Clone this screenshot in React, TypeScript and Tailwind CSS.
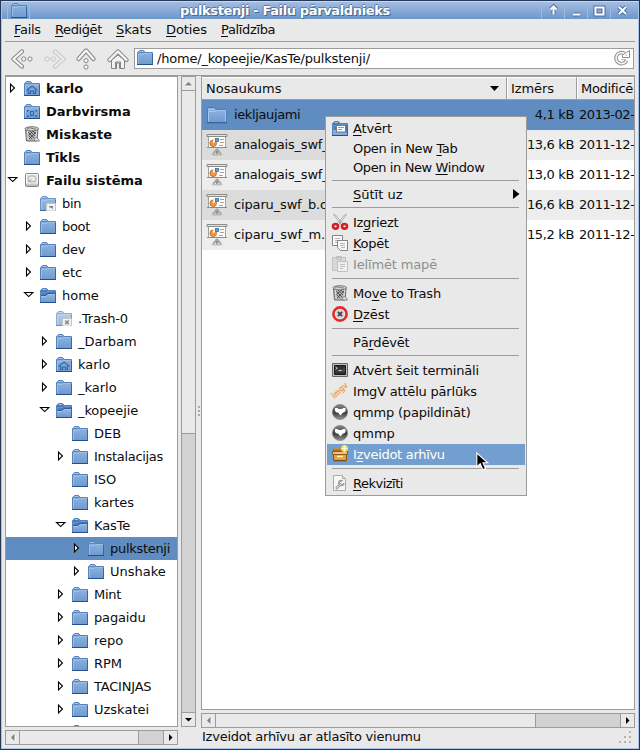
import React from "react";

type FolderKind = "plain" | "home" | "desktop" | "open" | "link" | "locked" | "doc";

function Folder({ kind = "plain" }: { kind?: FolderKind }) {
  const faded = kind === "link" ? 0.88 : kind === "locked" ? 0.65 : 1;
  const dark = kind === "open" || kind === "doc";
  return (
    <svg width="16" height="16" viewBox="0 0 16 16" className="block shrink-0">
      <defs>
        <linearGradient id="fbody" x1="0" y1="0" x2="0" y2="1">
          <stop offset="0" stopColor="#8fb5e1" />
          <stop offset="1" stopColor="#7099cf" />
        </linearGradient>
      </defs>
      <g opacity={faded}>
        <path d="M.5 15.500V3.500l2-2h4l1 1v1h8v12z" fill={dark ? "#4b7cb9" : "url(#fbody)"} stroke="#5482bd" />
        <path d="M1.500 3.500h4.500l1.500-1" stroke="#4c7bb8" fill="none" strokeWidth=".8" />
        <path d="M2.500 2.500h3.500" stroke="#a5c6ec" />
        <path d="M1.500 14.500V5.500h5l1-1h7" stroke={dark ? "#6b9ad2" : "#a3c4ea"} fill="none" strokeWidth=".8" />
        {kind === "open" && (
          <g>
            <path d="M1 15V9.500h5l2-2h7V15z" fill="url(#fbody)" />
            <path d="M1 9.500h5l2-2h7" fill="none" stroke="#a5c6ec" />
            <path d="M1 8.500h4.500l2-2H15" fill="none" stroke="#2f5f9f" />
          </g>
        )}
        <path d="M0 15.500h16" stroke="#24508f" />
        <path d="M15.500 5v10" stroke="#3766a6" />
      </g>
      {kind === "home" && (
        <g fill="none" stroke="#3767a7" strokeWidth="1.2">
          <path d="M2.500 10.500 8 6l5.500 4.500" />
          <path d="M4.500 10v3.500h2V11h3v2.500h2V10" />
        </g>
      )}
      {kind === "desktop" && (
        <g fill="none" stroke="#3767a7" strokeWidth="1.1">
          <path d="M5 7.500H3.500V9M11 7.500h1.500V9M3.500 12v1.500H5M12.500 12v1.500H11" />
          <rect x="6.500" y="8.500" width="3" height="4" />
        </g>
      )}
      {kind === "doc" && (
        <g>
          <path d="M4.500 12V5.500h9V12z" fill="#fff" stroke="#777" />
          <path d="M6 7.500h6M6 9.500h4" stroke="#999" />
          <path d="M1 15v-5h3v2.500h11V15z" fill="#83addd" />
          <path d="M0 15.500h16" stroke="#24508f" />
        </g>
      )}
      {(kind === "link" || kind === "locked") && (
        <g>
          <rect x="6.500" y="8.500" width="9" height="7.500" fill="#f2f2f0" stroke="#c4c4c4" />
          {kind === "link" ? (
            <path d="M9 11h4v3.500L12 13h-1l-2-1z" fill="#888" />
          ) : (
            <path d="m9.200 10.500 3.600 3.600m0-3.600-3.600 3.600" stroke="#888" strokeWidth="1.500" />
          )}
        </g>
      )}
    </svg>
  );
}

function BigFolder() {
  return (
    <svg width="22" height="20" viewBox="0 0 22 20" className="block shrink-0">
      <path d="M1.500 17.500v-14l1-1h6l1.500 2h9.500l1 1v12z" fill="url(#fbody)" stroke="#4b7ab7" />
      <path d="M2.500 16.500v-10h7l1-1h9v11" fill="none" stroke="#a9c8eb" />
      <path d="M2.500 4.500h6" stroke="#a9c8eb" />
      <path d="M1 17.800h20" stroke="#2f5d9e" />
    </svg>
  );
}

function Trash() {
  return (
    <svg width="16" height="16" viewBox="0 0 16 16" className="block shrink-0">
      <path d="m1.500 3 1 12h10.500L14 3z" fill="#b4b4b2" stroke="#6a6a68" />
      <path d="m4 6 6 6m-5 1 7-7M4 9l4 4m1-8 3 3M6 5l5 5m-6-1 4-4" stroke="#484846" strokeWidth=".9" />
      <path d="m3.500 5 .7 9M12.500 5l-.5 6" stroke="#e8e8e6" strokeWidth=".9" />
      <ellipse cx="7.800" cy="2.800" rx="6.800" ry="2.100" fill="#d3d3d1" stroke="#757573" />
      <path d="M3 3q2-2 4-1t5 1" fill="none" stroke="#777" />
      <path d="M10.500 12.500q2-2 3.500 0l1.500 2.500h-5z" fill="#ddd" stroke="#777" strokeWidth=".8" />
    </svg>
  );
}

function Drive() {
  return (
    <svg width="16" height="16" viewBox="0 0 16 16" className="block shrink-0">
      <rect x="1.500" y="1.500" width="13" height="13" rx="1" fill="#dededc" stroke="#868684" />
      <path d="M2.500 11.500v-9h11v9" fill="none" stroke="#f8f8f8" />
      <ellipse cx="8" cy="6.800" rx="4" ry="3" fill="#ececea" stroke="#b1b1af" />
      <path d="m4.500 10 3-3" stroke="#999" />
      <path d="M2 12.500h12v1.500H2z" fill="#b8b8b6" />
    </svg>
  );
}

function Presentation() {
  return (
    <svg width="22" height="22" viewBox="0 0 22 22" className="block shrink-0">
      <path d="M2.500 1.500h17v12h-17z" fill="#fcfcfb" stroke="#a2a39f" />
      <path d="M1 .5h20v2H1z" fill="#e2e2df" stroke="#8c8d89" />
      <circle cx="7.200" cy="9.300" r="3.300" fill="#e99a4c" stroke="#b5651c" strokeWidth=".8" />
      <path d="M7.200 9.300V5.500L10.500 7z" fill="#fff" />
      <rect x="9.500" y="4.500" width="3" height="3" fill="#6c9ad0" stroke="#396ba8" strokeWidth=".8" />
      <path d="M14 5.500h4M14 8.500h4M13 11.500h4" stroke="#a4a5a1" />
      <path d="M1 13.500h20" stroke="#8b8c88" />
      <path d="m11 15-4 5m4-5 4 5m-4-4v4M9 18h4" fill="none" stroke="#8f908c" strokeWidth="1.600" />
      <path d="m11 15.500-3.500 4m3.500-4 3.500 4" fill="none" stroke="#dcdcda" strokeWidth=".6" />
      <ellipse cx="11" cy="20.800" rx="6" ry=".8" fill="#9999" />
    </svg>
  );
}

function Expander({ open }: { open: boolean }) {
  return (
    <svg width="12" height="12" viewBox="0 0 12 12" className="block shrink-0">
      {open ? (
        <path d="M1.500 3.500h8.400L5.700 7.600z" fill="#fff" stroke="#000" strokeWidth="1.100" />
      ) : (
        <path d="M3.500 2v8L7.500 6z" fill="#fff" stroke="#000" strokeWidth="1.100" />
      )}
    </svg>
  );
}

const tight = "tracking-[-0.3px]";
type IconKind = FolderKind | "trash" | "drive";
const tree: [string, number, IconKind, "open" | "closed" | "", string?][] = [
  ["karlo", 0, "home", "closed"],
  ["Darbvirsma", 0, "desktop", ""],
  ["Miskaste", 0, "trash", "", "tracking-[0.1px]"],
  ["Tīkls", 0, "plain", ""],
  ["Failu sistēma", 0, "drive", "open"],
  ["bin", 1, "link", "", tight],
  ["boot", 1, "plain", "closed", tight],
  ["dev", 1, "plain", "closed", tight],
  ["etc", 1, "plain", "closed"],
  ["home", 1, "open", "open"],
  [".Trash-0", 2, "locked", "", "tracking-[-0.2px]"],
  ["_Darbam", 2, "plain", "closed"],
  ["karlo", 2, "home", "closed"],
  ["_karlo", 2, "plain", "closed"],
  ["_kopeejie", 2, "open", "open", "tracking-[-0.1px]"],
  ["DEB", 3, "plain", ""],
  ["Instalacijas", 3, "plain", "closed", tight],
  ["ISO", 3, "plain", ""],
  ["kartes", 3, "plain", "", "tracking-[-0.1px]"],
  ["KasTe", 3, "open", "open", "tracking-[-0.1px]"],
  ["pulkstenji", 4, "plain", "closed", tight],
  ["Unshake", 4, "plain", "closed"],
  ["Mint", 3, "plain", "closed", tight],
  ["pagaidu", 3, "plain", "closed", "tracking-[-0.15px]"],
  ["repo", 3, "plain", "closed"],
  ["RPM", 3, "plain", "closed"],
  ["TACINJAS", 3, "plain", "closed", "tracking-[-0.2px]"],
  ["Uzskatei", 3, "plain", "closed"],
  ["", 3, "plain", ""],
];
const indents = ["pl-0", "pl-4", "pl-8", "pl-12", "pl-16"];

function Tree() {
  return (
    <div className="h-[651px] w-[173px] overflow-hidden border border-[#9c9c9c] bg-white">
      {tree.map(([name, level, icon, state, spacing], i) => (
        <div key={i} className={`flex h-[23px] ${i === 20 ? "bg-[#5f8dc1]" : ""} ${indents[level]}`}>
          <div className="ml-px w-[17px] shrink-0 pt-[5px]">{state && <Expander open={state === "open"} />}</div>
          <div className="w-[22px] shrink-0 pt-[3px]">
            {icon === "trash" ? <Trash /> : icon === "drive" ? <Drive /> : <Folder kind={icon} />}
          </div>
          <span className={`self-center ${level === 0 ? "font-bold" : ""} ${spacing ?? ""}`}>{name}</span>
        </div>
      ))}
    </div>
  );
}

function Arrow({ dir, dim }: { dir: "up" | "down" | "left" | "right"; dim?: boolean }) {
  const d = { up: "M3 8.500h7L6.500 5z", down: "M3 5h7L6.500 8.500z", left: "M8.500 3v7L5 6.500z", right: "M5 3v7l3.500-3.500z" }[dir];
  return (
    <svg width="13" height="13" viewBox="0 0 13 13" className="block shrink-0">
      {dim && <path d={d} fill="#fff" transform="translate(1 1)" />}
      <path d={d} fill={dim ? "#7d7d7d" : "#000"} />
    </svg>
  );
}

function HScroll({ thumb, total }: { thumb: string; total: string }) {
  return (
    <div className={`flex h-[15px] border border-[#9c9c9c] bg-[#e9e9e9] ${total}`}>
      <div className="w-[14px] border-r border-[#9c9c9c]"><Arrow dir="left" dim /></div>
      <div className="grow" />
      <div className={`border-x border-[#9c9c9c] bg-[#d2d2d2] ${thumb}`} />
      <div className="w-[13px]"><Arrow dir="right" /></div>
    </div>
  );
}

function Chevron({ dir, faded }: { dir: "l" | "r" | "u"; faded?: boolean }) {
  const rot = dir === "l" ? "" : dir === "r" ? "rotate(180 11 11)" : "rotate(90 11 11)";
  return (
    <svg width="22" height="22" viewBox="0 0 22 22" className={`block shrink-0 ${faded ? "opacity-35" : ""}`}>
      <g transform={rot}>
        <path d="m11 3.500-8.500 7.500 8.500 7.500" fill="none" stroke="#858582" strokeWidth="4.200" strokeLinecap="round" strokeLinejoin="round" />
        <path d="m11 3.500-8.500 7.500 8.500 7.500" fill="none" stroke="#f7f7f5" strokeWidth="2.300" strokeLinecap="round" strokeLinejoin="round" />
        <circle cx="12.700" cy="11" r="2.100" fill="#f7f7f5" stroke="#858582" />
        <circle cx="19" cy="11" r="2.100" fill="#f7f7f5" stroke="#858582" />
      </g>
    </svg>
  );
}

function House() {
  return (
    <svg width="22" height="22" viewBox="0 0 22 22" className="block shrink-0">
      <path d="M4.500 12v8.500h5V15h3v5.500h5V12L11 7z" fill="#f2f2f0" stroke="#858582" />
      <path d="M2.500 12 11 3.500l8.500 8.500" fill="none" stroke="#858582" strokeWidth="4.200" strokeLinecap="round" strokeLinejoin="round" />
      <path d="M2.500 12 11 3.500l8.500 8.500" fill="none" stroke="#f7f7f5" strokeWidth="2.400" strokeLinecap="round" strokeLinejoin="round" />
      <path d="M8.500 20v-6h5v6" fill="none" stroke="#858582" />
    </svg>
  );
}

function Reload() {
  return (
    <svg width="16" height="16" viewBox="0 0 16 16" className="mt-px block shrink-0">
      <path d="M12.500 10.500A5.500 5.500 0 1 1 10.500 3.500" fill="none" stroke="#8c8c8a" strokeWidth="3.600" />
      <path d="M15.500.5v7H8.500v-2l2-2z" fill="#fff" stroke="#8c8c8a" />
      <path d="M12.500 10.500A5.500 5.500 0 1 1 10.500 3.500" fill="none" stroke="#f6f6f5" strokeWidth="1.700" />
      <path d="m10 3 3 3M7 9.500h5" stroke="#aaa" strokeWidth=".8" />
    </svg>
  );
}

function MenuIcon({ name }: { name: string }) {
  if (name === "open") return <Folder kind="doc" />;
  if (name === "trash") return <Trash />;
  return (
    <svg width="16" height="16" viewBox="0 0 16 16" className="block shrink-0 overflow-visible">
      {name === "cut" && (
        <g>
          <path d="M1.500.5 9.500 11l1.500-1L3.500 1zM14.500.5 6.500 11 5 10l7.500-9z" fill="#f8f8f8" stroke="#9b9b99" strokeWidth=".8" />
          <ellipse cx="3.500" cy="12.300" rx="2.500" ry="2.300" fill="none" stroke="#d31f26" strokeWidth="2.600" />
          <ellipse cx="12.500" cy="12.300" rx="2.500" ry="2.300" fill="none" stroke="#d31f26" strokeWidth="2.600" />
        </g>
      )}
      {name === "copy" && (
        <g fill="#fafafa" stroke="#858583">
          <path d="M.5.500h10v10H.5z" />
          <path d="M3 3.500h5M3 5.500h5M3 7.500h3" stroke="#b5b5b3" />
          <path d="M5.500 5.500h10v10h-7l-3-3z" />
          <path d="M8 8.500h5M8 10.500h5M9 12.500h4" stroke="#b5b5b3" />
        </g>
      )}
      {name === "paste" && (
        <g fill="#d8d8d6" stroke="#c0c0be">
          <path d="M.5 1.500h13v13H.5zM4.500.5h5v3h-5z" />
          <path d="M5.500 5.500h10v10h-10z" fill="#efefed" />
          <path d="M8 8.500h5M8 10.500h5M8 12.500h3" />
        </g>
      )}
      {name === "delete" && (
        <g>
          <circle cx="8" cy="8" r="6.600" fill="#f4f4f2" stroke="#df2a30" strokeWidth="2.600" />
          <circle cx="8" cy="8" r="4.200" fill="#dcdcda" stroke="#bbb" strokeWidth=".5" />
          <path d="m5.900 5.900 4.200 4.200m0-4.200-4.200 4.200" stroke="#444" strokeWidth="1.900" />
        </g>
      )}
      {name === "terminal" && (
        <g>
          <path d="M.5 1.500h15v13H.5z" fill="#bfc0bd" stroke="#666764" />
          <path d="M2.500 3.500h11v9h-11z" fill="#2e3436" stroke="#161a1b" />
          <path d="M3 10h10V6z" fill="#53595b" opacity=".6" />
          <path d="m3.500 5 1.800 1.300L3.500 7.600M6.500 8.500h3" fill="none" stroke="#e6e6e6" strokeWidth=".9" />
        </g>
      )}
      {name === "imgv" && (
        <text x="2.500" y="16" transform="rotate(-42 2.500 16)" fontSize="9" fontWeight="bold" fill="#eda75c" fontFamily="DejaVu Sans" textLength="19" lengthAdjust="spacingAndGlyphs">imgv</text>
      )}
      {name === "qmmp" && (
        <g>
          <defs>
            <linearGradient id="ball" x1="0" y1="0" x2="0" y2="1">
              <stop offset="0" stopColor="#8a8a8a" /><stop offset=".55" stopColor="#3c3c3c" /><stop offset="1" stopColor="#9a9a9a" />
            </linearGradient>
          </defs>
          <circle cx="8" cy="8" r="7.600" fill="url(#ball)" stroke="#777" strokeWidth=".6" />
          <path d="M3 4h2.500l1 1h3.500l1-1h2.500v3l-1.500 1.500h-1L8.500 11.500 6 8.500H4.500L3 7z" fill="#fff" />
        </g>
      )}
      {name === "archive" && (
        <g>
          <path d="M1.500 7.500h13v7h-13z" fill="#dfa34d" stroke="#91590c" />
          <path d="M.5 5.500h15v3H.5z" fill="#efc27b" stroke="#91590c" />
          <path d="M1 2.500h12v3H1z" fill="#a4691c" />
          <path d="M1.500 3h9" stroke="#dfa34d" />
          <path d="M5 10.500h6" stroke="#fff0c5" strokeWidth="1.500" />
          <path d="M2 14.800h12" stroke="#784706" />
          <circle cx="12.500" cy="2.500" r="3.400" fill="#f6e54b" />
          <path d="M12.500-.5v6M9.500 2.500h6" stroke="#fffbc9" strokeWidth="1.200" />
        </g>
      )}
      {name === "props" && (
        <g>
          <path d="M1.500.5h9l3 3v12h-12z" fill="#f6f6f4" stroke="#aaaaa8" />
          <path d="M10.500.5v3h3" fill="#ddd" stroke="#aaaaa8" />
          <path d="m4.800 13 3.500-3.500" stroke="#9b9b99" strokeWidth="2.800" strokeLinecap="round" />
          <circle cx="9.300" cy="8" r="2.400" fill="none" stroke="#9b9b99" strokeWidth="1.800" strokeDasharray="11.500 3.600" />
          <path d="m4.800 13 3.500-3.500" stroke="#f2f2f0" strokeLinecap="round" />
        </g>
      )}
    </svg>
  );
}

const menu: (null | [string, string, string, string, string?])[] = [
  ["open", "", "A", "tvērt", "tracking-[-0.15px]"],
  ["", "Open in New ", "T", "ab", "tracking-[-0.33px]"],
  ["", "Open in New ", "W", "indow", "tracking-[-0.4px]"],
  null,
  ["", "", "S", "ūtīt uz"],
  null,
  ["cut", "Iz", "g", "riezt", tight],
  ["copy", "", "K", "opēt", "tracking-[-0.3px]"],
  ["paste", "Ielīmēt mapē", "", "", "tracking-[-0.15px]"],
  null,
  ["trash", "Mo", "v", "e to Trash", "tracking-[-0.2px]"],
  ["delete", "", "D", "zēst"],
  null,
  ["", "Pā", "r", "dēvēt", "tracking-[-0.2px]"],
  null,
  ["terminal", "Atvērt šeit termināli", "", "", "tracking-[-0.17px]"],
  ["imgv", "ImgV attēlu pārlūks", "", "", "tracking-[-0.2px]"],
  ["qmmp", "qmmp (papildināt)", "", "", "tracking-[-0.2px]"],
  ["qmmp", "qmmp", "", ""],
  ["archive", "I", "z", "veidot arhīvu", tight],
  null,
  ["props", "", "R", "ekvizīti", "tracking-[-0.5px]"],
];
const mnemonic = "underline decoration-1 underline-offset-2 [text-decoration-skip-ink:none]";

function ContextMenu() {
  return (
    <div className="absolute left-[325px] top-[116px] h-[380px] w-[202px] border border-[#9c9c9c] bg-[#e9e9e9] p-px">
      {menu.map((m, i) =>
        m === null ? (
          <div key={i} className="ml-[5px] mr-1.5 h-2 pt-[3px]"><div className="h-px bg-[#9c9c9c]" /></div>
        ) : (
          <div
            key={i}
            className={`flex pl-[5px] ${m[0] ? "h-[21px]" : "h-[19px]"} ${
              m[0] === "archive" ? "bg-[#729fcf] text-white" : m[0] === "paste" ? "text-[#8f8f8f]" : ""
            }`}
          >
            <div className="w-[21px] shrink-0 pt-0.5">{m[0] && <MenuIcon name={m[0]} />}</div>
            <span className={`grow self-center ${m[4] ?? ""}`}>
              {m[1]}
              <span className={m[2] === "g" ? "underline decoration-1 underline-offset-4 [text-decoration-skip-ink:none]" : mnemonic}>{m[2]}</span>
              {m[3]}
            </span>
            {m[2] === "S" && (
              <svg width="7" height="10" viewBox="0 0 7 10" className="mr-[5px] mt-1 block"><path d="M0 0v10l6.500-5z" /></svg>
            )}
          </div>
        )
      )}
    </div>
  );
}

const files = [
  ["iekljaujami", "4,1 kB", "2013-02-", "tracking-[-0.38px]"],
  ["analogais_swf_", "13,6 kB", "2011-12-", "tracking-[-0.2px]"],
  ["analogais_swf_", "13,0 kB", "2011-12-", "tracking-[-0.2px]"],
  ["ciparu_swf_b.o", "16,6 kB", "2011-12-", "tracking-[-0.15px]"],
  ["ciparu_swf_m.", "15,2 kB", "2011-12-", "tracking-[-0.1px]"],
];
const rowColors = [
  ["bg-[#5f8dc1]", "bg-[#5f8dc1]"],
  ["bg-[#dcdcdc]", "bg-[#ededed]"],
  ["bg-[#ededed]", "bg-white"],
  ["bg-[#dcdcdc]", "bg-[#ededed]"],
  ["bg-[#ededed]", "bg-white"],
];

function FileList() {
  return (
    <div className="h-[634px] w-[434px] overflow-hidden border border-[#9c9c9c] bg-white">
      <div className="flex h-[23px] border-b border-[#9c9c9c] bg-[#e9e9e9]">
        <div className="flex w-[305px] shrink-0 items-center justify-between border-r border-[#9c9c9c] border-t border-t-white pl-1 pr-[7px]">
          <span>Nosaukums</span>
          <svg width="9" height="5" viewBox="0 0 9 5"><path d="M0 0h9L4.500 5z" /></svg>
        </div>
        <div className="flex w-[70px] shrink-0 items-center border-l border-r border-t border-l-white border-r-[#9c9c9c] border-t-white pl-[3px] tracking-[-0.1px]">Izmērs</div>
        <div className="flex grow items-center border-l border-t border-white pl-[3px] tracking-[-0.3px]">Modificē</div>
      </div>
      {files.map(([n, s, d, spacing], i) => (
        <div key={i} className="flex h-[30px] whitespace-nowrap">
          <div className={`flex w-[305px] shrink-0 items-center pl-1 ${rowColors[i][0]}`}>
            <div className="w-7 shrink-0">{i === 0 ? <BigFolder /> : <Presentation />}</div>
            <span className={spacing}>{n}</span>
          </div>
          <div className={`flex w-[70px] shrink-0 items-center justify-end pr-[3px] tracking-[-0.35px] ${rowColors[i][1]}`}>{s}</div>
          <div className={`flex grow items-center pl-0.5 tracking-[-0.45px] ${rowColors[i][1]}`}>{d}</div>
        </div>
      ))}
    </div>
  );
}

function TitleBar() {
  const icons = [
    "M6.500 2.500v8M3.500 5.500l3-3 3 3",
    "M3 10.500h7",
    "M2.500 3.500h8v7h-8z",
    "m3 3 7 7m0-7-7 7",
  ];
  return (
    <div className="flex h-[18px] items-center border-t border-[#c9d7ef] bg-linear-to-b from-[#a4bce1] to-[#6c97c9]">
      <div className="ml-[5px] flex h-full w-[23px] justify-center border-x border-[#9db9df]"><Folder /></div>
      <div className="grow pr-px text-center font-bold tracking-[-0.36px] text-white [text-shadow:1px_1px_0_#47688f,-1px_0_0_#567cad,0_-1px_0_#567cad]">
        pulkstenji - Failu pārvaldnieks
      </div>
      {icons.map((d) => (
        <div key={d} className="flex h-full w-[23px] items-center justify-center border-l border-[#9db9df]">
          <svg width="13" height="13" viewBox="0 0 13 13">
            <path d={d} fill="none" stroke="#4c6f9d" strokeWidth="4" />
            <path d={d} fill="none" stroke="#fff" strokeWidth="2" />
          </svg>
        </div>
      ))}
      <div className="w-[5px]" />
    </div>
  );
}

const menuBar: [string, string, string][] = [
  ["F", "ails", "w-[41px] tracking-[-0.3px]"],
  ["R", "ediģēt", "w-[61px] tracking-[-0.4px]"],
  ["S", "kats", "w-[50px]"],
  ["D", "oties", "w-[55px] tracking-[-0.1px]"],
  ["P", "alīdzība", "w-[60px] tracking-[-0.35px]"],
];

export default function App() {
  return (
    <div className="relative h-[750px] w-[640px] cursor-default overflow-hidden border border-[#253858] bg-[#e9e9e9] font-['DejaVu_Sans',sans-serif] text-[13px] leading-4 text-[#0c0c0c]">
      <div className="h-[748px] border-x border-b border-[#a6c4eb]">
        <TitleBar />
        <div className="mx-[3px] flex h-[23px] items-center border-b border-[#9c9c9c] pl-[9px]">
          {menuBar.map(([k, rest, w]) => (
            <div key={rest} className={`shrink-0 ${w}`}><span className={mnemonic}>{k}</span>{rest}</div>
          ))}
        </div>
        <div className="flex h-[33px] items-center pl-[9px] pr-[4px]">
          <Chevron dir="l" />
          <div className="ml-[11px]"><Chevron dir="r" faded /></div>
          <div className="ml-[9px]"><Chevron dir="u" /></div>
          <div className="ml-[10px]"><House /></div>
          <div className="ml-[5px] flex h-[21px] grow border border-[#9c9c9c] bg-white pl-[2px] pr-[3px]">
            <Folder />
            <span className="ml-1 grow self-center tracking-[-0.2px]">/home/_kopeejie/KasTe/pulkstenji/</span>
            <Reload />
          </div>
        </div>
        <div className="mx-[3px] border-t border-[#9c9c9c]">
          <div className="flex">
            <div>
              <Tree />
              <div className="mt-[3px]"><HScroll thumb="w-[26px]" total="w-[173px]" /></div>
            </div>
            <div className="ml-[3px] flex h-[651px] w-[15px] flex-col border border-[#9c9c9c] bg-[#e9e9e9]">
              <div className="h-[14px] border-b border-[#9c9c9c]"><Arrow dir="up" dim /></div>
              <div className="h-[342px]" />
              <div className="grow border-y border-[#9c9c9c] bg-[#d2d2d2]" />
              <div className="h-[13px]"><Arrow dir="down" /></div>
            </div>
            <div className="flex h-[651px] w-[5px] items-center justify-center pt-[19px]">
              <div className="flex flex-col gap-0.5">
                <i className="block size-0.5 bg-[#aaa]" /><i className="block size-0.5 bg-[#aaa]" /><i className="block size-0.5 bg-[#aaa]" />
              </div>
            </div>
            <div>
              <FileList />
              <div className="mt-[3px]"><HScroll thumb="w-[86px]" total="w-[434px]" /></div>
              <div className="flex h-[18px] items-center justify-between pl-px pr-[3px]">
                <span className="tracking-[-0.23px]">Izveidot arhīvu ar atlasīto vienumu</span>
                <svg width="14" height="14" viewBox="0 0 14 14" fill="#b4b4b4">
                  <path d="M11 1h2v2h-2zM11 6h2v2h-2zM11 11h2v2h-2zM6 6h2v2H6zM6 11h2v2H6zM1 11h2v2H1z" />
                </svg>
              </div>
            </div>
          </div>
        </div>
      </div>
      <div className="absolute -left-px -top-px">
        <ContextMenu />
        <svg className="absolute left-[476px] top-[452px]" width="13" height="19" viewBox="0 0 13 19">
          <path d="M.8 1v14l3.400-3.200 2.600 6 2.700-1.200L7 10.800h4.800z" fill="#000" stroke="#fff" strokeWidth="1.100" />
        </svg>
      </div>
    </div>
  );
}
